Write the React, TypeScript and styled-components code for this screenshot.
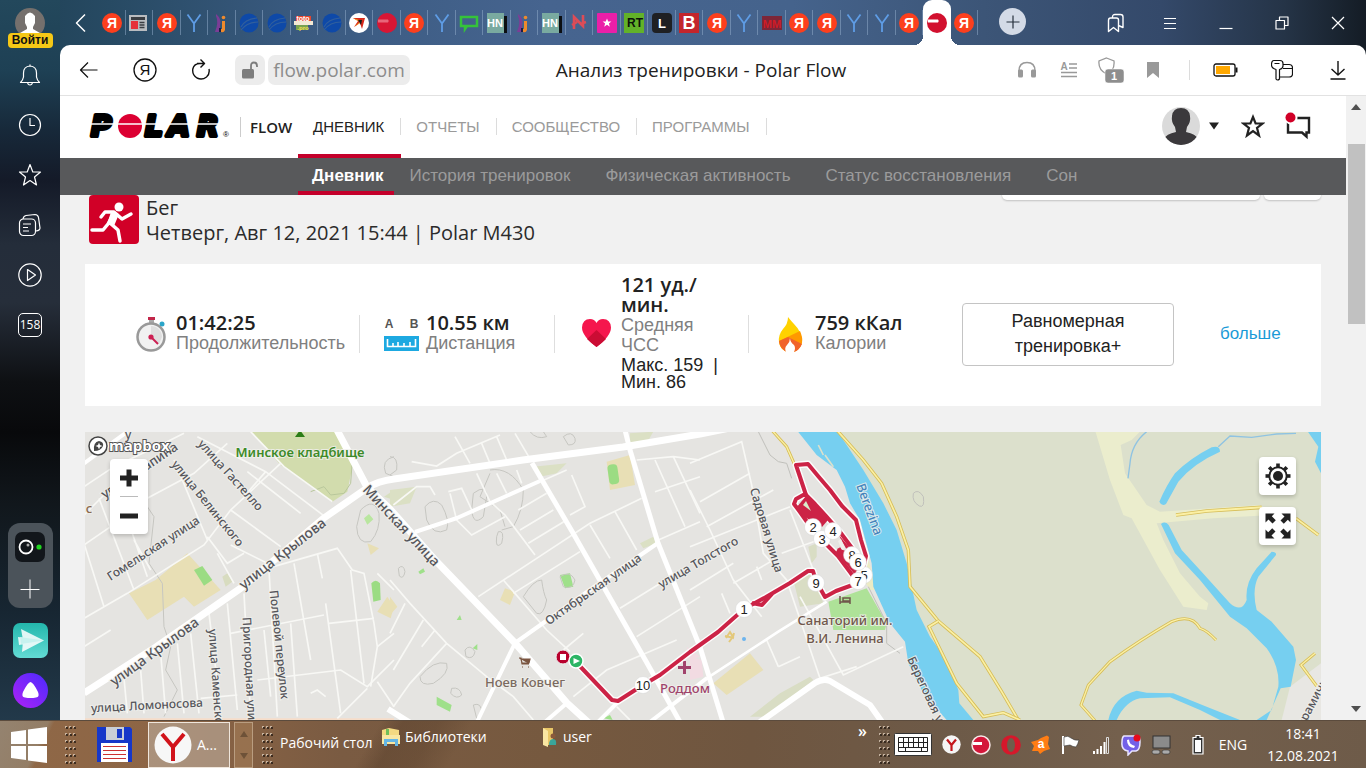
import React from 'react';
import styled, { createGlobalStyle, css } from 'styled-components';

const UI = '"Open Sans", "Noto Sans", sans-serif';
const ARIAL = '"Liberation Sans", Arial, sans-serif';
const RED = '#d10027';

const GlobalStyle = createGlobalStyle`
  *, *::before, *::after { box-sizing: border-box; }
  body { margin: 0; background: #10161d; font-family: ${ARIAL}; color: #222; }
  button { font: inherit; color: inherit; background: none; border: 0; padding: 0; cursor: pointer; }
  a { color: inherit; text-decoration: none; }
  svg { display: block; flex: none; }
`;

const Desktop = styled.div`
  height: 100vh;
  display: flex;
  flex-direction: column;
  overflow: hidden;
`;

const Browser = styled.div`
  flex: 1;
  min-height: 0;
  display: flex;
  background: linear-gradient(90deg, #1f4054 0, #274a63 8%, #3a5a80 22%, #46648f 40%, #45638c 58%, #3c5577 72%, #34496a 85%, #253447 94%, #141c25 100%);
`;

/* ---------- side panel ---------- */

const SidePanel = styled.aside`
  width: 60px;
  flex: none;
  display: flex;
  flex-direction: column;
  align-items: center;
  padding: 8px 0 12px;
  color: #fff;
  background: linear-gradient(180deg, #23485c 0, #1e4054 10%, #17293a 18%, #141a28 25%, #242d3a 34%, #262e3a 42%, #0e1013 53%, #08090b 60%, #11171c 70%, #172632 85%, #22394a 100%);
`;

const SignIn = styled.button`
  display: flex;
  flex-direction: column;
  align-items: center;
  height: 42px;
`;

const SignInLabel = styled.span`
  width: 45px;
  height: 15px;
  margin-top: -5px;
  border-radius: 4px;
  background: #f5c816;
  color: #111;
  font: 700 12px/15px ${ARIAL};
  position: relative;
`;

const SideButton = styled.button`
  width: 50px;
  height: 50px;
  display: grid;
  place-items: center;
`;

const TabCounter = styled.span`
  width: 24px;
  height: 24px;
  border: 1px solid #fff;
  border-radius: 5px;
  font: 400 12px/22px ${UI};
`;

const AppDock = styled.div`
  margin-top: auto;
  display: flex;
  flex-direction: column;
  align-items: center;
  gap: 15px;
`;

const DockGroup = styled.div`
  width: 45px;
  height: 85px;
  border-radius: 12px;
  background: #4b535a;
  display: flex;
  flex-direction: column;
  align-items: center;
  justify-content: space-around;
`;

/* ---------- tab strip ---------- */

const Main = styled.div`
  flex: 1;
  min-width: 0;
  display: flex;
  flex-direction: column;
`;

const TabStrip = styled.div`
  height: 45px;
  flex: none;
  display: flex;
  align-items: flex-start;
`;

const ScrollTabs = styled.button`
  width: 38px;
  height: 45px;
  display: grid;
  place-items: center;
  padding-left: 6px;
`;

const Tabs = styled.div`
  width: 880px;
  height: 45px;
  display: grid;
  grid-template-columns: repeat(32, minmax(0, 1fr));
`;

const Tab = styled.button<{ $active?: boolean }>`
  display: grid;
  place-items: center;
  position: relative;
  &::after {
    content: '';
    position: absolute;
    right: 0;
    top: 10px;
    width: 1px;
    height: 25px;
    background: rgba(150, 175, 205, 0.5);
  }
  ${p => p.$active && css`
    background: #fff;
    border-radius: 9px 9px 0 0;
    &::before, &::after {
      content: '';
      position: absolute;
      top: auto;
      bottom: 0;
      width: 9px;
      height: 9px;
      background: radial-gradient(circle at 0 0, transparent 9px, #fff 9px);
    }
    &::before { left: -9px; }
    &::after { right: -9px; transform: scaleX(-1); }
  `}
`;

const NewTab = styled.button`
  width: 27px;
  height: 27px;
  margin: 8px 0 0 21px;
  border-radius: 50%;
  background: #d3dae6;
  display: grid;
  place-items: center;
`;

const WindowButtons = styled.div`
  margin-left: auto;
  display: grid;
  grid-template-columns: repeat(5, 56px);
`;

const WindowButton = styled.button`
  height: 45px;
  display: grid;
  place-items: center;
`;

/* ---------- address bar ---------- */

const AddressBar = styled.div`
  height: 51px;
  flex: none;
  display: flex;
  align-items: center;
  background: #fff;
  border-bottom: 1px solid #e2e2e2;
  border-radius: 10px 10px 0 0;
`;

const NavButtons = styled.div`
  display: grid;
  grid-template-columns: repeat(3, 56px);
  padding: 0 6px 0 1px;
`;

const ToolButton = styled.button`
  height: 40px;
  display: grid;
  place-items: center;
`;

const Chip = styled.button<{ $wide?: boolean }>`
  height: 30px;
  width: ${p => (p.$wide ? '142px' : '30px')};
  margin-right: 3px;
  border-radius: 7px;
  background: #ececec;
  color: #8d8d8d;
  font: 400 19px/30px ${UI};
  display: grid;
  place-items: center;
`;

const PageTitle = styled.h1`
  flex: 1;
  margin: 0;
  padding-right: 17px;
  text-align: center;
  color: #222;
  font: 400 19px/30px ${UI};
`;

const ToolGroup = styled.div<{ $col: number; $n: number }>`
  display: grid;
  grid-template-columns: repeat(${p => p.$n}, ${p => p.$col}px);
`;

const ToolDivider = styled.span`
  width: 1px;
  height: 20px;
  margin: 0 8px 0 15px;
  background: #dcdcdc;
`;

/* ---------- page ---------- */

const Viewport = styled.div`
  flex: 1;
  min-height: 0;
  display: flex;
`;

const Page = styled.div`
  flex: 1;
  min-width: 0;
  display: flex;
  flex-direction: column;
  background: #f1f1f1;
`;

const SiteHeader = styled.header`
  height: 62px;
  flex: none;
  display: flex;
  align-items: center;
  padding: 0 35px 0 26px;
  background: #fff;
`;

const FlowLink = styled.a`
  margin-left: 10px;
  padding-left: 9px;
  border-left: 1px solid #ccc;
  width: 58px;
  color: #222;
  font: 600 15px/20px ${UI};
`;

const SiteNav = styled.nav`
  display: flex;
  height: 62px;
`;

const SiteLink = styled.a<{ $active?: boolean }>`
  display: flex;
  align-items: center;
  font: 400 15px/17px ${ARIAL};
  color: ${p => (p.$active ? '#222' : '#9a9a9a')};
  border-bottom: 4px solid ${p => (p.$active ? '#c4002b' : 'transparent')};
  padding-top: 2px;
  span { padding: 0 16px 0 15px; border-right: 1px solid #dcdcdc; }
`;

const HeaderTools = styled.div`
  margin: 0 0 2px auto;
  display: flex;
  align-items: center;
`;

const Avatar = styled.button`
  display: flex;
  align-items: center;
  gap: 9px;
  margin-right: 22px;
`;

const HeaderTool = styled.button`
  margin-right: 20px;
  &:last-child { margin-right: 0; }
`;

const SubNav = styled.nav`
  height: 37px;
  flex: none;
  display: flex;
  background: #58595b;
  padding-left: 238px;
`;

const SubLink = styled.a<{ $active?: boolean }>`
  padding: 0 ${p => (p.$active ? 10 : 14)}px 0 14px;
  margin-right: ${p => (p.$active ? 2 : 7)}px;
  font: ${p => (p.$active ? 700 : 400)} 17px/36px ${ARIAL};
  color: ${p => (p.$active ? '#fff' : '#9b9b9b')};
  border-bottom: 4px solid ${p => (p.$active ? '#c4002b' : 'transparent')};
`;

const Content = styled.main`
  flex: 1;
  min-height: 0;
  overflow: hidden;
  display: flex;
  flex-direction: column;
  padding: 0 25px;
`;

const SessionHead = styled.section`
  display: flex;
  align-items: flex-start;
  height: 69px;
  flex: none;
`;

const SportIcon = styled.span`
  width: 50px;
  height: 49px;
  margin: 0 7px 0 4px;
  border-radius: 4px;
  background: ${RED};
`;

const SessionText = styled.div`
  font: 400 20px/25px ${UI};
  color: #2b2b2b;
  p { margin: 0; }
`;

const SessionActions = styled.div`
  margin-left: auto;
  display: flex;
  gap: 4px;
`;

const GhostButton = styled.button<{ $w: number }>`
  width: ${p => p.$w}px;
  height: 38px;
  margin-top: -33px;
  border-radius: 5px;
  background: #fff;
  box-shadow: 0 1px 2px rgba(0, 0, 0, 0.2);
`;

const Summary = styled.section`
  flex: none;
  min-height: 142px;
  display: grid;
  grid-template-columns: 275fr 195fr 194fr 213fr 212fr 147fr;
  align-items: center;
  padding-bottom: 2px;
  background: #fff;
`;

const Stat = styled.div<{ $pad: number; $gap: number; $last?: boolean }>`
  display: flex;
  align-items: center;
  gap: ${p => p.$gap}px;
  height: 38px;
  padding-left: ${p => p.$pad}px;
  border-right: 1px solid ${p => (p.$last ? 'transparent' : '#dedede')};
`;

const StatText = styled.div`
  min-width: 0;
  padding-bottom: 2px;
`;

const StatValue = styled.div`
  font: 600 20px/20px ${UI};
  color: #222;
`;

const StatLabel = styled.div`
  font: 400 18px/20px ${ARIAL};
  color: #808080;
`;

const StatExtra = styled.div`
  margin-top: 2px;
  font: 400 18px/17px ${ARIAL};
  color: #222;
  white-space: pre;
`;

const TargetButton = styled.button`
  height: 63px;
  border: 1px solid #c4c4c4;
  border-radius: 4px;
  font: 400 18px/25px ${ARIAL};
  color: #222;
  padding: 0 40px;
`;

const MoreLink = styled.a`
  padding-left: 46px;
  font: 400 17px/20px ${ARIAL};
  color: #1a9ad7;
`;

/* ---------- map ---------- */

const MapPanel = styled.section`
  flex: 1;
  min-height: 0;
  margin-top: 26px;
  position: relative;
  overflow: hidden;
`;

const MapSvg = styled.svg`
  width: 100%;
  height: 100%;
`;

const Label = styled.text<{ $size?: number; $color?: string; $weight?: number }>`
  font-family: "Noto Sans", "Open Sans", sans-serif;
  font-size: ${p => p.$size ?? 13}px;
  font-weight: ${p => p.$weight ?? 500};
  fill: ${p => p.$color ?? '#55555a'};
  stroke: rgba(240, 240, 236, 0.85);
  stroke-width: 2px;
  paint-order: stroke;
  dominant-baseline: central;
`;

const KmText = styled.text`
  font: 400 13px ${ARIAL};
  fill: #222;
  text-anchor: middle;
`;

const ZoomBox = styled.div`
  position: absolute;
  left: 25px;
  top: 27px;
  width: 38px;
  height: 75px;
  border-radius: 4px;
  background: #fff;
  box-shadow: 0 2px 4px rgba(0, 0, 0, 0.2);
  display: grid;
  grid-template-rows: 1fr 1px 1fr;
  justify-items: center;
  i { width: 18px; height: 1px; background: #bbb; }
  button { width: 38px; display: grid; place-items: center; }
`;

const MapTools = styled.div`
  position: absolute;
  right: 25px;
  top: 25px;
  display: grid;
  gap: 12px;
`;

const MapTool = styled.button`
  width: 37px;
  height: 38px;
  border-radius: 4px;
  background: #fff;
  box-shadow: 0 2px 4px rgba(0, 0, 0, 0.2);
  display: grid;
  place-items: center;
`;

const MapBrand = styled.a`
  position: absolute;
  left: 2px;
  top: 2px;
`;

const ScrollBar = styled.div`
  width: 20px;
  flex: none;
  display: flex;
  flex-direction: column;
  align-items: center;
  padding: 8px 0;
  background: #f1f1f1;
`;

const Thumb = styled.div`
  width: 17px;
  height: 180px;
  margin-top: 34px;
  margin-bottom: auto;
  background: #c1c1c1;
`;

/* ---------- taskbar ---------- */

const Taskbar = styled.footer`
  height: 48px;
  flex: none;
  display: flex;
  align-items: center;
  color: #fff;
  font: 400 14px/20px ${UI};
  border-top: 1px solid #5b4b3d;
  background:
    linear-gradient(115deg, rgba(150, 140, 125, 0.75) 0, rgba(150, 135, 115, 0.7) 44px, transparent 50px),
    linear-gradient(120deg, transparent 330px, rgba(60, 40, 25, 0.25) 350px, rgba(60, 40, 25, 0.2) 380px, transparent 410px),
    linear-gradient(90deg, #8f6847 0, #8d6545 12%, #7a5b42 25%, #76593f 40%, #6f5640 55%, #6d5a48 70%, #74604d 82%, #6e5b49 100%);
`;

const StartButton = styled.button`
  width: 65px;
  padding-left: 11px;
`;

const GripSvg = styled.svg`
  opacity: 0.8;
`;

const Launcher = styled.button`
  margin: 0 15px 0 20px;
`;

const TaskButton = styled.button`
  width: 82px;
  height: 46px;
  display: flex;
  align-items: center;
  gap: 4px;
  padding-left: 4px;
  border: 1px solid #efe6dc;
  background: rgba(190, 175, 160, 0.6);
`;

const TaskScroll = styled.div`
  width: 19px;
  height: 46px;
  margin: 0 9px 0 4px;
  display: flex;
  flex-direction: column;
  justify-content: space-around;
  align-items: center;
  border: 1px solid #b99d80;
  background: rgba(170, 130, 90, 0.5);
`;

const Shortcuts = styled.div`
  display: flex;
  align-items: center;
  padding: 0 0 3px 7px;
`;

const Shortcut = styled.button<{ $w: number; $low?: boolean }>`
  display: flex;
  align-items: center;
  gap: 4px;
  width: ${p => p.$w}px;
  padding-bottom: ${p => (p.$low ? 0 : 12)}px;
  white-space: nowrap;
`;

const Tray = styled.div`
  margin-left: auto;
  display: flex;
  align-items: center;
`;

const Overflow = styled.button`
  font: 600 16px/20px ${UI};
  padding-bottom: 28px;
  margin-right: 12px;
`;

const TrayIcons = styled.div`
  display: grid;
  grid-template-columns: 38px repeat(8, 30px);
  justify-items: center;
  align-items: center;
  margin: 0 16px 0 8px;
  svg:first-child { margin-right: 8px; }
`;

const Lang = styled.button`
  width: 58px;
`;

const Clock = styled.time`
  width: 104px;
  padding-right: 22px;
  text-align: center;
  font: 400 14px/22px ${UI};
`;

/* ---------- favicons ---------- */

const IconText = styled.text<{ $size: number; $fill?: string }>`
  font: 700 ${p => p.$size}px ${ARIAL};
  fill: ${p => p.$fill ?? '#fff'};
  text-anchor: middle;
`;

const Favicon = ({ kind }: { kind: string }) => {
  const art: Record<string, React.ReactNode> = {
    ya: <><circle cx="10" cy="10" r="10" fill="#fc3f1d" /><IconText x="10" y="15" $size={14}>Я</IconText></>,
    y: <path d="M3.500 1.500 L10 10.500 V19 M16.500 1.500 L10 10.500" fill="none" stroke="#5f9de6" strokeWidth="1.800" />,
    news: <><rect x="0" y="2" width="18" height="16" fill="#b9bcc0" /><rect x="2" y="4" width="14" height="3" fill="#3a3d42" /><rect x="2" y="8" width="7" height="8" fill="#e6323a" /><path d="M10.500 9.500h5M10.500 12h5M10.500 14.500h5" stroke="#3a3d42" strokeWidth="1.500" /></>,
    ij: <><path d="M4 1 Q10 6 8 12 L8 19 L3 19 Q7 9 4 3z" fill="#7b3d96" /><path d="M10 8 H13 V17 Q12 20 9 19 V16 H10z" fill="#ef8a2c" /><circle cx="11.500" cy="4.500" r="1.800" fill="#ef8a2c" /><path d="M7 15h2v4h-2z" fill="#1b1f44" /></>,
    ball: <><circle cx="10" cy="10" r="9.500" fill="#0e49a8" /><path d="M2 14 Q6 6 18 5 M2 17 Q8 9 19 9" fill="none" stroke="#315f9d" strokeWidth="1.200" /></>,
    toto: <><rect x="2" y="3" width="15" height="5" fill="#e8452e" /><rect x="0" y="8" width="19" height="4" fill="#f3e9d4" /><rect x="2" y="12" width="12" height="5" fill="#79a24f" /><IconText x="9" y="8" $size={7}>toto</IconText><IconText x="9" y="17" $size={6} $fill="#f8e14c">.pro</IconText></>,
    arrow: <><circle cx="10" cy="10" r="10" fill="#fff" /><path d="M4 5 L16 5 L13 16 L11 10 L5 14 L9 8z" fill="#d8291c" /><path d="M4 5 L13 8 L9 8z M5 14 L11 10 L14 6z" fill="#f5a81c" /><path d="M9 7 L13 7 L12 12z" fill="#1c1c1c" /></>,
    polar: <><circle cx="10" cy="10" r="10" fill="#d81634" /><path d="M1 6.500 H11 Q12.500 8 11 9.500 H1z" fill="#e8667a" /></>,
    polarOn: <><circle cx="10" cy="10" r="10" fill="#d2102e" /><path d="M1 6.500 H11 Q12.500 8 11 9.500 H1z" fill="#fff" /></>,
    chat: <path d="M2 4 H18 V13 H8 L6 16 V13 H2z" fill="none" stroke="#35c33a" strokeWidth="2.500" />,
    hn: <><rect width="17" height="20" fill="#79aaa0" /><rect x="17" y="3" width="3" height="17" fill="#0c0f12" /><IconText x="8" y="14" $size={11}>HN</IconText></>,
    n: <path d="M5 16 V4 L14 13 V2 M3 12 L8 9 M11 11 L17 9" fill="none" stroke="#dd4c57" strokeWidth="2.600" />,
    star: <><rect width="20" height="20" rx="1" fill="#ea1fa8" /><path d="M10 5.500l1.200 3h3.200l-2.500 2 .9 3.200-2.800-1.900-2.800 1.900.9-3.200-2.500-2h3.200z" fill="#fff" /></>,
    rt: <><rect width="20" height="20" fill="#62b229" /><IconText x="11" y="14" $size={12} $fill="#0c120a">RT</IconText></>,
    l: <><rect width="20" height="20" rx="4" fill="#1f2023" /><IconText x="10" y="15" $size={13}>L</IconText></>,
    b: <><rect width="20" height="20" fill="#c3252b" /><IconText x="10" y="16" $size={18}>B</IconText></>,
    mm: <><rect x="0" y="3" width="20" height="14" fill="#7d2638" /><IconText x="10" y="15" $size={11} $fill="#d01b26">ММ</IconText></>,
  };
  return <svg width="20" height="20" viewBox="0 0 20 20" aria-hidden="true">{art[kind]}</svg>;
};

const TABS = ['ya', 'news', 'ya', 'y', 'ij', 'ball', 'ball', 'toto', 'ball', 'arrow', 'polar', 'ya', 'y', 'chat', 'hn', 'ij', 'hn', 'n', 'star', 'rt', 'l', 'b', 'ya', 'y', 'mm', 'ya', 'ya', 'y', 'y', 'ya', 'polarOn', 'ya'];

/* A line icon in a square box */
const Line = ({ s = 24, w = 1.2, c = '#fff', children }: { s?: number; w?: number; c?: string; children: React.ReactNode }) => (
  <svg width={s} height={s} viewBox={`0 0 ${s} ${s}`} fill="none" stroke={c} strokeWidth={w} strokeLinejoin="round" aria-hidden="true">{children}</svg>
);

const Grip = () => (
  <GripSvg width="11" height="40" viewBox="-1 0 11 40" aria-hidden="true">
    {[0, 1, 2, 3, 4, 5].map(r => [0, 1, 2].map(k => (
      <g key={`${r}${k}`}><rect x={k * 4 - 1} y={r * 7 + 1} width="2" height="2" fill="#d9c8b6" /><rect x={k * 4} y={r * 7 + 2} width="2" height="2" fill="#2b2018" /></g>
    )))}
  </GripSvg>
);

const Logo = () => (
  <svg width="144" height="34" viewBox="86 110 144 34" role="img" aria-label="Polar">
    <g fontFamily='"DejaVu Sans", sans-serif' fontWeight="700" fontStyle="italic" fontSize="28" stroke="#000" strokeWidth="4" strokeLinejoin="round">
      <text x="91" y="136">P</text>
      <text x="145" y="136">L</text>
      <text x="168" y="136">A</text>
      <text x="197" y="136">R</text>
    </g>
    <circle cx="130" cy="126" r="12" fill="#dc0032" />
    <path d="M86 124 H226" stroke="#fff" strokeWidth="1.500" />
    <text x="223" y="137" fontFamily='"Liberation Sans", sans-serif' fontSize="8">®</text>
  </svg>
);

/* ---------- map drawing ---------- */

/* Vector tiles are drawn at three units per screen pixel */
const Tile = ({ x, y = 430, children }: { x: number; y?: number; children: React.ReactNode }) => (
  <g transform={`translate(${x} ${y}) scale(0.33333)`}>{children}</g>
);

const Yellow = ({ d, w = 10 }: { d: string; w?: number }) => (
  <>
    <path d={d} fill="none" stroke="#d6bd58" strokeWidth={w} />
    <path d={d} fill="none" stroke="#fbf0a4" strokeWidth={w - 5} />
  </>
);

type Street = { t: string; x: number; y: number; a: number; size?: number; start?: boolean; color?: string; weight?: number };
const STREETS: Street[] = [
  { t: 'улица Чапина', x: 139, y: 470, a: -34 },
  { t: 'улица Гастелло', x: 231, y: 475, a: 48, size: 12 },
  { t: 'улица Белинского', x: 208, y: 503, a: 51, size: 12 },
  { t: 'Гомельская улица', x: 153, y: 548, a: -33, size: 12 },
  { t: 'улица Крылова', x: 154, y: 651, a: -36, size: 14 },
  { t: 'улица Крылова', x: 282, y: 553, a: -38, size: 14 },
  { t: 'Минская улица', x: 402, y: 525, a: 47, size: 14 },
  { t: 'улица Ломоносова', x: 147, y: 705, a: -3, size: 12 },
  { t: 'улица Каменского', x: 213, y: 629, a: 86, size: 12, start: true },
  { t: 'Пригородная улица', x: 247, y: 617, a: 87, size: 12, start: true },
  { t: 'Полевой переулок', x: 274, y: 590, a: 84, size: 12, start: true },
  { t: 'Октябрьская улица', x: 593, y: 589, a: -35, size: 12 },
  { t: 'улица Толстого', x: 698, y: 562, a: -30, size: 12 },
  { t: 'Садовая улица', x: 767, y: 530, a: 73, size: 12 },
  { t: 'Береговая улица', x: 911, y: 657, a: 65, size: 12, start: true },
  { t: 'ерамичн', x: 1312, y: 702, a: -62, size: 12 },
  { t: 'Berezina', x: 870, y: 509, a: 70, size: 13, color: '#4585bd' },
  { t: 'Минское кладбище', x: 300, y: 452, a: 0, size: 13, color: '#3d8a28', weight: 600 },
  { t: 'Ноев Ковчег', x: 525, y: 682, a: 0, color: '#7b6a60' },
  { t: 'Санаторий им.', x: 845, y: 620, a: 0, color: '#70574c' },
  { t: 'В.И. Ленина', x: 845, y: 638, a: 0, color: '#70574c' },
  { t: 'Роддом', x: 685, y: 688, a: 0, color: '#a0446c' },
  { t: 'с', x: 89, y: 508, a: 0, color: '#8a6a50' },
];

const KM: [string, number, number][] = [
  ['8', 852, 555], ['5', 864, 575], ['2', 813, 527], ['3', 822, 539], ['4', 833, 531], ['6', 858, 562], ['7', 858, 581], ['9', 816, 583], ['1', 744, 609], ['10', 643, 685],
];

const ROUTE = [
  'M575 661 L612 700 L618 701 L643 685 L660 675 L690 652 L718 632 L744 609 L766 597 L790 583 L808 571 L813 571 L816 581 L825 597 L836 591 L858 583',
  'M752 603 L762 605 L772 594',
  'M858 583 L850 572 L838 556 L822 540 L812 529 L800 512 L794 504 L796 499 L805 494 L815 504 L826 516 L840 532 L852 548 L862 564',
  'M806 495 L796 465 L808 464 L818 476 L830 490 L842 506 L856 520 L861 540 L866 556 L862 572',
];

const RoutePath = () => (
  <>
    {ROUTE.map(d => <path key={d} d={d} fill="none" stroke="#fff" strokeWidth="7" strokeLinejoin="round" opacity="0.9" />)}
    {ROUTE.map(d => <path key={d} d={d} fill="none" stroke="#cc2346" strokeWidth="4" strokeLinejoin="round" />)}
    <path d="M796 508 L806 496 L828 520 L822 527 L803 516z" fill="#cc2346" />
    <path d="M803 505 L806 501 L811 511z" fill="#d9eccb" />
    <path d="M838 534 L862 562 L856 576 L836 552 L838 548 L848 552z" fill="#cc2346" />
    <path d="M836 553 L840 547 L852 565z" fill="#cc2346" />
    <path d="M838 541 L841 539 L845 548 L842 550z" fill="#f0f0ec" />
  </>
);

const MapDrawing = () => (
  <MapSvg viewBox="85 432 1236 288" preserveAspectRatio="xMinYMin slice" role="img" aria-label="Карта маршрута">
    <rect x="85" y="432" width="1236" height="288" fill="#e5e4e1" />
    <Tile x={84}>
      <path d="M500 5 H765 L805 110 L790 185 L745 215 L590 105z" fill="#d2dcad" />
      <path d="M680 185 L720 170 L740 195 L780 190 L800 160 L805 90" fill="none" stroke="#b9c79c" strokeWidth="3" />
      <path d="M900 200 L930 180 V210z" fill="#d8dfc0" />
      <path d="M135 490 L215 450 L310 370 L410 480 L330 530 L300 500 L190 570z" fill="#e8dfb5" />
      <path d="M330 420 L355 408 L385 450 L360 467z" fill="#9bdc83" />
      <path d="M415 440 L430 430 L445 455 L425 470z" fill="#d8dcc0" />
      <path d="M862 460 Q875 445 888 460 L890 510 L868 515z" fill="#9bdc83" />
      <path d="M840 265 L855 252 L868 268 L850 284z" fill="#b9e69f" />
      <path d="M850 340 L885 355 L860 375z M880 545 L910 500 L930 530 L920 565z" fill="#e8dfb5" />
      <path d="M0 865 H930 V870 H0z" fill="#f6ddc9" />
      <g fill="none" stroke="#c6c6c1" strokeWidth="3">
        <path d="M130 110 L190 230 L210 260 L195 400 L235 460 L240 590 L260 650 L245 720 L280 780 L240 860" />
        <path d="M830 240 Q870 200 885 250 Q890 300 860 335 Q820 345 818 290z" />
        <path d="M930 80 Q890 90 905 130 L930 140" />
      </g>
      <g fill="none" stroke="#f8f8f5" strokeWidth="5">
        <path d="M0 565 L130 490 L360 345 L440 240 L590 100 M0 340 L60 530 M45 205 L150 480 M100 180 L190 440 M0 170 L90 110 L240 40 L300 10 M0 255 L60 195 M150 330 L200 420 M0 345 L80 290 M180 210 L330 130 L430 40" />
        <path d="M340 20 L545 125 L730 265 M500 5 L600 110 L745 215 M490 125 L650 250 M440 240 L590 350 M370 320 L430 400 L480 370 M400 370 L450 460 M270 90 L370 330 M440 345 L550 400 M545 125 L480 200" />
        <path d="M550 415 L760 355 L805 420 L840 430 L870 580 L880 650 L860 770 M630 400 L680 690 M700 370 L715 445 M725 520 L770 850 M440 610 L720 555 M735 580 L870 565 M375 550 L410 840 M430 520 L460 840 M480 490 L500 860 M555 420 L580 860 M540 600 L560 800 M620 580 L640 860" />
        <path d="M320 610 L345 850 M280 640 L300 850 M230 670 L245 850 M170 720 L180 850 M120 745 L130 850 M350 805 L460 795 M520 750 L770 720 L850 770 L930 690 M880 755 L930 830 M760 865 L850 775 M680 790 L700 780 L725 800 M880 430 L930 480 M880 650 L930 610 M800 420 L840 760 M0 650 L80 600" />
      </g>
      <path d="M0 100 L130 5" stroke="#fff" strokeWidth="12" />
    </Tile>
    <Tile x={390}>
      <path d="M0 180 L80 170 L60 220 L0 230z M430 110 L530 100 L500 130 L450 140z M750 340 L790 320 L800 340 L760 355z M720 10 L790 5 L770 40 L720 45z" fill="#dbe0c4" />
      <path d="M650 95 L720 75 L735 165 L660 180z" fill="#e8dfb5" />
      <rect x="655" y="103" width="30" height="60" rx="12" transform="rotate(-8 670 133)" fill="#9bdc83" />
      <path d="M510 435 L540 430 L550 470 L525 475z M140 800 L185 825 L180 845 L140 825z M85 425 L100 415 L105 425 L90 433z M200 570 L210 555 L215 570z M640 865 L660 855 L668 870z M248 655 L262 642 L262 660z" fill="#9fe08a" />
      <path d="M345 475 L375 485 L360 525 L330 510z M0 500 L22 530 L0 555z" fill="#e8dfb5" />
      <path d="M930 680 L900 690 L890 650z" fill="#f2dbe2" />
      <g fill="none" stroke="#c6c6c1" strokeWidth="3">
        <path d="M105 230 Q130 200 155 225 Q180 270 170 300 Q130 320 110 270z M250 190 Q290 160 290 200 L280 260 Q250 290 245 240z M325 305 Q345 300 335 340 Q315 360 320 320z" />
        <path d="M520 20 Q545 0 555 25 Q560 45 535 45z M420 5 Q440 30 470 20 L460 5 M0 80 Q25 80 20 120 L0 135 M25 415 Q40 400 45 425 Q40 450 28 438z M400 500 Q430 450 455 450 Q460 490 470 510 Q460 560 440 550z M510 440 Q540 420 555 450 Q550 480 520 470z" />
        <path d="M90 740 Q130 690 170 700 Q180 730 130 760 Q90 770 90 740z M225 660 Q240 640 255 665 Q250 690 228 680z M185 775 Q210 770 215 795 Q200 810 182 790z M250 825 Q275 815 275 850 L260 865z M300 120 Q360 110 400 180 Q400 240 370 290 L335 300 M300 130 L270 200 L330 240 L345 290" />
      </g>
      <g fill="none" stroke="#f8f8f5" strokeWidth="5">
        <path d="M65 95 L140 108 L200 70 L330 15 M195 20 L240 100 M275 40 L300 100 M320 20 L350 90 M375 10 L425 95 M10 225 L80 170 L120 170 L135 195 M175 185 L215 175 L250 250 M180 190 L200 270 L245 315 L345 260 M260 130 L300 215 L345 255 L435 375 M385 240 L470 190 M390 300 L490 240 M415 340 L530 270 M320 130 L350 190 M380 120 L395 160" />
        <path d="M265 500 L440 385 L600 280 L755 205 M340 450 L470 600 L540 665 M370 490 L570 365 M545 135 L585 230 L540 255 M600 285 L660 385 M675 245 L740 360 M740 90 L850 80 L930 90 M795 90 L885 290 M795 185 L930 140 M805 330 L930 275 M690 535 L860 430 M740 620 L930 500 M550 800 L650 720 L860 630 M520 660 L580 610 M850 80 L930 250" />
        <path d="M0 450 L60 520 L170 640 L290 740 L370 800 L430 870 M45 520 L0 610 M100 570 L10 720 M135 600 L95 650 M170 640 L60 760 L10 830 M680 830 L720 870 M450 155 L530 120" />
      </g>
    </Tile>
    <Tile x={690}>
      <path d="M70 760 L180 670 L220 720 L110 795z" fill="#e8dfb5" />
      <path d="M310 450 L370 430 L400 520 L330 530z M355 350 L380 340 L380 380 L365 400z M180 860 L270 790 L360 740 L370 750 L230 860z" fill="#d9ddc4" />
      <path d="M0 680 L35 690 L40 740 L0 750z" fill="#f2dbe2" />
      <path d="M520 330 L560 480 L540 480 L515 440z" fill="#ecebc4" />
      <path d="M415 515 L530 475 L590 580 L585 600 L430 600z" fill="#aee298" />
      <path d="M320 0 L380 75 L440 120 L465 170 L480 220 L510 270 L545 400 L550 470 L600 580 L645 635 L655 700 L700 790 L770 870 H900 V0z" fill="#76cff0" />
      <path d="M440 0 L520 120 L580 220 L620 300 L650 400 L680 540 L720 620 L770 690 L805 780 L808 820 L850 870 H1893 V0z" fill="#dce0cc" />
      <path d="M385 45 L400 75 M405 75 L430 110" stroke="#dce0cc" strokeWidth="5" />
      <g fill="none" stroke="#c0c0bb" strokeWidth="3">
        <path d="M205 5 L240 75 L265 95 L290 100 L305 145 M535 470 L590 580 L590 640 L630 670" />
        <path d="M670 190 Q685 175 700 200 Q705 235 688 228 Q665 215 670 190z" />
      </g>
      <g fill="none" stroke="#f8f8f5" strokeWidth="5">
        <path d="M0 100 L155 35 L185 165 M30 215 L180 130 M0 180 L60 300 L130 450 L215 560 M0 350 L300 230 M50 290 L250 180 M130 460 L250 390 M185 165 L220 370 L290 450 L390 745 M300 240 L370 420 M275 370 L385 330 M200 410 L215 450 M95 490 L120 550 M230 630 L265 710 M330 500 L460 735 L640 650 M390 745 L500 710 M265 710 L330 680 M0 480 L130 400" />
      </g>
      <path d="M50 745 L265 605 L410 515" fill="none" stroke="#fff" strokeWidth="8" />
      <Yellow d="M440 0 L520 90 L575 160 L620 260 L655 360 L660 470 L745 573 L870 680 L935 785 L985 870" />
      <Yellow d="M745 573 L717 590 L800 760 L880 860 L940 848 L990 870" />
      <Yellow d="M245 0 L290 50 L310 95 L345 190" w={9} />
    </Tile>
    <Tile x={1000}>
      <path d="M285 0 H425 L395 30 L362 45 L375 130 L440 225 L480 245 L780 225 L820 255 L640 265 L470 280 L490 330 L540 430 L600 500 L625 520 L620 540 L550 530 L480 420 L395 265 L370 255 L330 150z" fill="#ebedcd" />
      <path d="M845 870 L870 770 L963 700 V870z" fill="#e8e7e3" />
      <path d="M440 5 Q395 40 390 100 L384 145 M655 50 L690 18 L755 22 L830 12 L888 10" fill="none" stroke="#8fc3e2" strokeWidth="4" />
      <path d="M920 0 H963 V130 L945 95 L955 50z" fill="#76cff0" />
      <path d="M478 215 Q500 165 525 130 Q570 85 635 52 Q660 45 660 65 Q580 100 535 155 L498 222 Q485 230 478 215z" fill="#76cff0" />
      <path d="M483 282 Q495 272 506 285 L545 360 L600 420 L690 520 Q725 550 740 510 Q735 460 770 415 L815 365 Q830 365 828 375 L775 440 Q755 480 770 540 L815 575 L880 650 L888 690 L872 770 L842 775 L800 870 H770 L815 840 L835 770 Q840 710 800 655 L740 595 L690 560 L600 450 L525 370z" fill="#76cff0" />
      <path d="M325 870 Q340 800 410 782 L440 788 L520 790 L620 830 L720 870 H660 L600 840 L510 802 L420 805 Q375 815 350 870z" fill="#76cff0" />
      <Yellow d="M528 255 L620 243 L785 232" w={11} />
      <Yellow d="M888 265 L955 315" />
      <Yellow d="M648 630 Q620 600 600 595 Q575 550 515 575 Q420 630 330 695 L265 765 L243 825 L285 872" w={9} />
      <Yellow d="M945 670 L903 705 L950 768" w={9} />
    </Tile>
    <g fill="none" stroke="#fff" strokeLinejoin="round">
      <path d="M84 693 L156 647 L241 588 L324 518 L367 488 Q378 481 394 479 L523 460 L623 447 L700 434 L740 426" strokeWidth="7" />
      <path d="M337 430 L367 487 L390 509 L437 562 L515 643 L567 703 L590 724" strokeWidth="7" />
      <path d="M532 463 L573 533 L647 663 L680 722" strokeWidth="5" />
      <path d="M625 430 L630 450 L658 543 L700 647 L723 722" strokeWidth="5" />
      <path d="M415 532 L457 518 L540 481" strokeWidth="4" />
      <path d="M658 543 L594 587 L515 643 L476 724" strokeWidth="4" />
      <path d="M545 722 L567 703 M598 722 L620 700 M650 722 L707 678" strokeWidth="4" />
      <path d="M760 722 L815 683 Q823 678 830 681 L870 705 L882 722 M388 709 L412 724" strokeWidth="6" />
    </g>
    {STREETS.map(s => (
      <Label key={`${s.t}${s.x}`} transform={`translate(${s.x} ${s.y}) rotate(${s.a})`} textAnchor={s.start ? 'start' : 'middle'} $size={s.size} $color={s.color} $weight={s.weight}>{s.t}</Label>
    ))}
    <Label x="125" y="434" $size={12}>у</Label>
    <path d="M300 430 L295 437 H305z" fill="#2c7d16" />
    <path d="M519 658 h2 l1 6 h7 M521 659 h9 l-1 4 h-7z M522 667 h1 M528 667 h1" fill="#7a5540" stroke="#7a5540" strokeWidth="1.200" />
    <path d="M683 661 h3 v5 h5 v3 h-5 v5 h-3 v-5 h-5 v-3 h5z" fill="#a0446c" />
    <path d="M840 596 v8 M840 602 h10 v2 M843 598 h7 v3 h-7z" stroke="#70574c" strokeWidth="1.500" fill="none" />
    <path d="M726 638 l4 -6 3 5 1 -4 M729 642 l3 -4 M725 636 l9 2" stroke="#e3c87a" strokeWidth="2" fill="none" />
    <circle cx="744" cy="639" r="2" fill="#6cb4ee" />
    <RoutePath />
    {KM.map(([n, x, y]) => (
      <g key={n}><circle cx={x} cy={y} r="8.500" fill="#fff" stroke="#d5d5d5" strokeWidth="0.500" /><KmText x={x} y={y + 5}>{n}</KmText></g>
    ))}
    <circle cx="563" cy="657" r="7" fill="#b8002c" stroke="#eee" strokeWidth="1" />
    <rect x="560" y="654" width="6" height="6" fill="#fff" />
    <circle cx="576" cy="661" r="7" fill="#2cb565" stroke="#fff" strokeWidth="1.500" />
    <path d="M573.500 658 L580 661 L573.500 664z" fill="#fff" />
  </MapSvg>
);

/* ---------- sections ---------- */

const Side = () => (
  <SidePanel>
    <SignIn>
      <svg width="30" height="30" viewBox="0 0 30 30" aria-hidden="true"><circle cx="15" cy="15" r="15" fill="#75706d" /><path d="M10 8 Q15 1 20 8 V15 L18 19 V21 L25 25 Q15 33 5 25 L12 21 V19 L10 15z" fill="#fff" /></svg>
      <SignInLabel>Войти</SignInLabel>
    </SignIn>
    <SideButton aria-label="Уведомления"><Line><path d="M12 1.500 V3 M12 3 Q5.500 3.500 5.500 10 V14 Q5 17 2.500 19.500 H21.500 Q19 17 18.500 14 V10 Q18.500 3.500 12 3z M9.500 19.500 Q10 22 12 22 T14.500 19.500" /></Line></SideButton>
    <SideButton aria-label="История"><Line><circle cx="12" cy="12" r="10.500" /><path d="M12 5 V12.500 H17" /></Line></SideButton>
    <SideButton aria-label="Избранное"><Line><path d="M12 1.500 L14.800 9 H22.500 L16.500 14 L18.500 22 L12 17.500 L5.500 22 L7.500 14 L1.500 9 H9.200z" /></Line></SideButton>
    <SideButton aria-label="Коллекции"><Line><rect x="1.500" y="6" width="16" height="16.500" rx="4" /><path d="M5 6 Q5.500 3 8 2.500 L17 1.500 Q20 1.500 20.500 4.500 L22 15 Q22 17.500 18 18 M5 11 H13 M5 14.500 H10 M5 18 H11" /></Line></SideButton>
    <SideButton aria-label="Видео"><Line><circle cx="12" cy="12" r="11.200" /><path d="M9.500 6.500 L17.500 12 L9.500 17.500z" /></Line></SideButton>
    <SideButton aria-label="Вкладки"><TabCounter>158</TabCounter></SideButton>
    <AppDock>
      <DockGroup>
        <button aria-label="Камера"><svg width="30" height="30" viewBox="0 0 30 30" aria-hidden="true"><rect width="30" height="30" rx="7" fill="#12161b" /><circle cx="11" cy="15" r="6.500" fill="none" stroke="#fff" strokeWidth="1.800" /><circle cx="13" cy="13" r="1.500" fill="#aaa" /><circle cx="24" cy="15" r="2.600" fill="#1ed51e" /></svg></button>
        <button aria-label="Добавить"><Line s={20} w={1}><path d="M10 0.500 V19.500 M0.500 10.500 H19.500" /></Line></button>
      </DockGroup>
      <button aria-label="Мессенджер"><svg width="35" height="35" viewBox="0 0 35 35" aria-hidden="true"><defs><linearGradient id="msg" x2="0" y2="1"><stop offset="0" stopColor="#23b7ac" /><stop offset="1" stopColor="#63dbd4" /></linearGradient></defs><rect width="35" height="35" rx="7" fill="url(#msg)" /><path d="M8 6 L31 17.500 L10 17z M5 14 L31 17.500 L6 22z M10 18 L31 17.500 L9 29z" fill="#fff" opacity="0.850" /><path d="M7 14 L31 17.500 L8 21z" fill="#c8f2ef" /></svg></button>
      <button aria-label="Алиса"><svg width="35" height="35" viewBox="0 0 35 35" aria-hidden="true"><defs><linearGradient id="alice" x1="1" x2="0" y2="1"><stop offset="0" stopColor="#4a2bff" /><stop offset="1" stopColor="#b021f5" /></linearGradient></defs><circle cx="17.500" cy="17.500" r="17.500" fill="url(#alice)" /><path d="M17.500 9 Q20 9 25 19 Q27 24 23 24.500 Q17.500 25.500 12 24.500 Q8 24 10 19 Q15 9 17.500 9z" fill="#fff" /></svg></button>
    </AppDock>
  </SidePanel>
);

const TopBar = () => (
  <TabStrip>
    <ScrollTabs aria-label="Прокрутить вкладки"><Line s={20} w={1.500}><path d="M13 1.500 L4.500 10 L13 18.500" /></Line></ScrollTabs>
    <Tabs>{TABS.map((k, i) => <Tab key={i} $active={k === 'polarOn'} aria-label={`Вкладка ${i + 1}`}><Favicon kind={k} /></Tab>)}</Tabs>
    <NewTab aria-label="Новая вкладка"><Line s={14} w={1.200} c="#26303c"><path d="M7 0.500 V13.500 M0.500 7 H13.500" /></Line></NewTab>
    <WindowButtons>
      <WindowButton aria-label="Закладки"><Line s={20} w={1.400}><path d="M4.500 7.500 Q4.500 5 6.500 5 H12.500 Q14.500 5 14.500 7 V18.500 L9.500 14.500 L4.500 18.500z M8.500 5 V4 Q8.500 1.500 11 1.500 H16.500 Q19 1.500 19 4 V14.500 L14.500 12.500" /></Line></WindowButton>
      <WindowButton aria-label="Меню"><Line s={14} w={1}><path d="M1 2.500 H13 M1 7.500 H13 M1 12.500 H13" /></Line></WindowButton>
      <WindowButton aria-label="Свернуть"><Line s={14}><path d="M0.500 12.500 H13.500" /></Line></WindowButton>
      <WindowButton aria-label="Развернуть"><Line s={14}><path d="M1 4.500 H9.500 V13 H1z M4.500 4.500 V1 H13 V9.500 H9.500" /></Line></WindowButton>
      <WindowButton aria-label="Закрыть"><Line s={14}><path d="M1 1 L13 13 M13 1 L1 13" /></Line></WindowButton>
    </WindowButtons>
  </TabStrip>
);

const Address = () => (
  <AddressBar>
    <NavButtons>
      <ToolButton aria-label="Назад"><Line s={20} c="#111"><path d="M1.500 10 H18.500 M9 2.500 L1.500 10 L9 17.500" /></Line></ToolButton>
      <ToolButton aria-label="Яндекс"><svg width="24" height="24" viewBox="0 0 24 24" aria-hidden="true"><circle cx="12" cy="12" r="11" fill="none" stroke="#111" strokeWidth="1.300" /><text x="12" y="17" textAnchor="middle" fontFamily='"Liberation Sans", sans-serif' fontSize="15" fill="#111">Я</text></svg></ToolButton>
      <ToolButton aria-label="Обновить"><Line s={22} w={1.400} c="#111"><path d="M10 4.500 Q4 4.500 2.800 10 Q2 16 7 19 Q12 21.500 16.500 18 Q20 15 19 10 M7 4.500 H14.500 M10.500 0.500 L14.500 4.500 L10.500 8.500" /></Line></ToolButton>
    </NavButtons>
    <Chip aria-label="Соединение не защищено"><svg width="18" height="18" viewBox="0 0 18 18" aria-hidden="true"><rect x="1" y="8" width="12" height="9.500" rx="1.500" fill="#7d7d7d" /><path d="M10 8 V5 Q10 1.500 13 1.500 T16 5 V6" fill="none" stroke="#7d7d7d" strokeWidth="1.800" /></svg></Chip>
    <Chip $wide>flow.polar.com</Chip>
    <PageTitle>Анализ тренировки - Polar Flow</PageTitle>
    <ToolGroup $n={4} $col={42}>
      <ToolButton aria-label="Слушать"><svg width="20" height="18" viewBox="0 0 20 18" aria-hidden="true"><path d="M2 10 Q2 1.500 10 1.500 T18 10" fill="none" stroke="#999" strokeWidth="1.500" /><rect x="1" y="8.500" width="5" height="8" rx="1.500" fill="#999" /><rect x="14" y="8.500" width="5" height="8" rx="1.500" fill="#999" /></svg></ToolButton>
      <ToolButton aria-label="Режим чтения"><svg width="18" height="18" viewBox="0 0 18 18" aria-hidden="true"><path d="M9 3 H17 M9 7 H17 M1 11.500 H17 M1 15.500 H17" stroke="#999" strokeWidth="1.600" /><text x="4" y="9" textAnchor="middle" fontFamily='"Liberation Sans", sans-serif' fontWeight="700" fontSize="10" fill="#999">A</text></svg></ToolButton>
      <ToolButton aria-label="Защита"><svg width="26" height="26" viewBox="0 0 26 26" aria-hidden="true"><path d="M8.500 1 L16 4 Q17 14 8.500 17 Q0 13 1 4z" fill="none" stroke="#999" strokeWidth="1.300" /><rect x="7" y="12" width="19" height="14" rx="3" fill="#8e8e8e" stroke="#fff" strokeWidth="0.500" /><text x="16" y="23" textAnchor="middle" fontFamily='"Liberation Sans", sans-serif' fontWeight="700" fontSize="11" fill="#fff">1</text></svg></ToolButton>
      <ToolButton aria-label="Закладка"><svg width="14" height="18" viewBox="0 0 14 18" aria-hidden="true"><path d="M1 1 H13 V17 L7 12 L1 17z" fill="#999" /></svg></ToolButton>
    </ToolGroup>
    <ToolDivider />
    <ToolGroup $n={3} $col={56}>
      <ToolButton aria-label="Батарея"><svg width="26" height="14" viewBox="0 0 26 14" aria-hidden="true"><rect x="1" y="1" width="21" height="12" rx="2" fill="none" stroke="#111" strokeWidth="1.300" /><path d="M22.500 4.500 h2 v5 h-2z" fill="#111" /><rect x="3" y="3" width="14" height="8" fill="#ffa800" /></svg></ToolButton>
      <ToolButton aria-label="Пароли"><Line s={22} c="#111"><path d="M3 1.500 H9 Q12 1.500 12 4.500 V7 Q12 9.500 8.500 10.500 V20 Q6.500 22 5 20 V10.500 Q0.500 9 0.500 6 Q0.500 1.500 3 1.500z M3.500 4.500 H8.500 M12.500 5.500 H18 Q21.500 5.500 21.500 9 V15 Q21.500 18 18 18 H9 M12 9.500 H21" /></Line></ToolButton>
      <ToolButton aria-label="Загрузки"><Line s={20} w={1.400} c="#111"><path d="M10 1 V15 M3.500 9 L10 15 L16.500 9 M2.500 19 H17.500" /></Line></ToolButton>
    </ToolGroup>
  </AddressBar>
);

const Header = () => (
  <>
    <SiteHeader>
      <a href="#home"><Logo /></a>
      <FlowLink href="#flow">FLOW</FlowLink>
      <SiteNav>
        {['ДНЕВНИК', 'ОТЧЕТЫ', 'СООБЩЕСТВО', 'ПРОГРАММЫ'].map((t, i) => <SiteLink key={t} href={`#nav${i}`} $active={i === 0}><span>{t}</span></SiteLink>)}
      </SiteNav>
      <HeaderTools>
        <Avatar aria-label="Профиль">
          <svg width="38" height="38" viewBox="0 0 38 38" aria-hidden="true"><defs><clipPath id="av"><circle cx="19" cy="19" r="19" /></clipPath></defs><g clipPath="url(#av)"><rect width="38" height="38" fill="#dadada" /><path d="M10 9 Q11 1 19 1 T28 9 Q29 15 25 20 L24 25 Q34 27 36 32 V38 H2 V32 Q4 27 14 25 L13 20 Q9 15 10 9z" fill="#3b393c" /></g></svg>
          <svg width="10" height="8" viewBox="0 0 10 8" aria-hidden="true"><path d="M0 0.500 H10 L5 7.500z" fill="#222" /></svg>
        </Avatar>
        <HeaderTool aria-label="Избранное"><svg width="24" height="24" viewBox="0 0 24 24" aria-hidden="true"><path d="M12 3 L14.600 9.500 H21.500 L16 13.800 L18 21.500 L12 17 L6 21.500 L8 13.800 L2.500 9.500 H9.400z" fill="none" stroke="#222" strokeWidth="2.200" /></svg></HeaderTool>
        <HeaderTool aria-label="Сообщения"><svg width="26" height="28" viewBox="0 0 26 28" aria-hidden="true"><path d="M3 6 H24 V20.500 H21.500 V24.500 L17 20.500 H3z" fill="none" stroke="#222" strokeWidth="2.400" /><circle cx="6" cy="6" r="6.500" fill="#fff" /><circle cx="5.500" cy="5.500" r="5" fill="#d10027" /></svg></HeaderTool>
      </HeaderTools>
    </SiteHeader>
    <SubNav>
      {['Дневник', 'История тренировок', 'Физическая активность', 'Статус восстановления', 'Сон'].map((t, i) => <SubLink key={t} href={`#sub${i}`} $active={i === 0}>{t}</SubLink>)}
    </SubNav>
  </>
);

const Session = () => (
  <>
    <SessionHead>
      <SportIcon>
        <svg width="50" height="49" viewBox="0 0 50 49" aria-hidden="true"><circle cx="30" cy="12" r="4.500" fill="#fff" /><path d="M12 22 L16 17 L25 17 L33 24 L42 19 M25 18 L19 29 L14 35 H3 M21 28 L29 35 L31 46" fill="none" stroke="#fff" strokeWidth="3.500" strokeLinejoin="round" strokeLinecap="round" /><path d="M22 17 L30 19 L25 31 L18 29z" fill="#fff" /></svg>
      </SportIcon>
      <SessionText><p>Бег</p><p>Четверг, Авг 12, 2021 15:44 | Polar M430</p></SessionText>
      <SessionActions><GhostButton $w={258} aria-label="Действия" /><GhostButton $w={57} aria-label="Ещё" /></SessionActions>
    </SessionHead>
    <Summary>
      <Stat $pad={51} $gap={9}>
        <svg width="31" height="36" viewBox="0 0 31 36" aria-hidden="true"><path d="M12 1 H19 V4 H18 V7 H13 V4 H12z" fill="#c2274a" /><path d="M13 4 H18 V7 H13z" fill="#aaa" /><circle cx="26" cy="8" r="2.500" fill="#2ba5c9" /><circle cx="15" cy="21" r="13.500" fill="#f1f1f1" stroke="#999" strokeWidth="2.500" /><path d="M15 10 A11 11 0 0 1 26 21 L23 28 L15 21z" fill="#dedede" /><path d="M15 21 L22 28" stroke="#cc1f52" strokeWidth="2" /><circle cx="15" cy="21" r="2.600" fill="#cc1f52" /></svg>
        <StatText><StatValue>01:42:25</StatValue><StatLabel>Продолжительность</StatLabel></StatText>
      </Stat>
      <Stat $pad={24} $gap={7}>
        <svg width="35" height="36" viewBox="0 0 35 36" aria-hidden="true"><IconText x="5" y="12" $size={12} $fill="#555">A</IconText><IconText x="30" y="12" $size={12} $fill="#555">B</IconText><rect y="20" width="35" height="15" fill="#1da9e1" /><path d="M3.500 23 V30.500 H31.500 V23 M9 27 V30 M14 26 V30 M20 27 V30 M26 26 V30" fill="none" stroke="#fff" strokeWidth="1.600" /></svg>
        <StatText><StatValue>10.55 км</StatValue><StatLabel>Дистанция</StatLabel></StatText>
      </Stat>
      <Stat $pad={26} $gap={9}>
        <svg width="31" height="32" viewBox="0 0 31 32" aria-hidden="true"><path d="M15.500 29 Q1 18 1 9.500 Q1.500 1 9 1 Q13.500 1 15.500 5 Q17.500 1 22 1 Q29.500 1 30 9.500 Q30 18 15.500 29z" fill="#f5164d" /><path d="M15.500 12 L25 21 Q21 25 15.500 29 Q10 25 6 21z" fill="#cb0c34" /></svg>
        <StatText><StatValue>121 уд./<br />мин.</StatValue><StatLabel>Средняя<br />ЧСС</StatLabel><StatExtra>{'Макс. 159  |\nМин. 86'}</StatExtra></StatText>
      </Stat>
      <Stat $pad={29} $gap={12} $last>
        <svg width="25" height="36" viewBox="0 0 25 36" aria-hidden="true"><path d="M10 1 Q14 6 16 8 Q24 16 24 25 Q23 34 15 36 H10 Q2 34 1 26 Q0 19 5 13 Q10 8 10 1z" fill="#ffd200" /><path d="M1 25 L22 15 Q25 22 24 27 Q22 34 15 36 H10 Q2 34 1 25z" fill="#ff9900" /><path d="M1 25 L10 21 L24 28 Q21 35 15 36 H10 Q2 34 1 25z" fill="#f1632b" /><path d="M12 22 Q12 26 16 29 Q18 32 16 36 H8 Q6 32 9 29 Q12 26 12 22z" fill="#fff" /></svg>
        <StatText><StatValue>759 кКал</StatValue><StatLabel>Калории</StatLabel></StatText>
      </Stat>
      <TargetButton>Равномерная тренировка+</TargetButton>
      <MoreLink href="#more">больше</MoreLink>
    </Summary>
    <MapPanel>
      <MapDrawing />
      <MapBrand href="#mapbox" aria-label="mapbox">
        <svg width="90" height="26" viewBox="0 0 90 26" aria-hidden="true"><circle cx="11" cy="12" r="9" fill="#fff" stroke="#444" strokeWidth="1.500" /><path d="M7 17 Q6 8 12 7 Q17 8 16 12 Q14 17 7 17z" fill="#444" /><path d="M12 8.500 l1 2.500 2.500 1 -2.500 1 -1 2.500 -1 -2.500 -2.500 -1 2.500 -1z" fill="#fff" /><text x="22" y="17" fontFamily='"Open Sans", sans-serif' fontWeight="700" fontSize="15" fill="#fff" stroke="#555" strokeWidth="2" paintOrder="stroke">mapbox</text></svg>
      </MapBrand>
      <ZoomBox>
        <button aria-label="Приблизить"><Line s={18} w={5} c="#222"><path d="M9 0.500 V17.500 M0 9 H18" /></Line></button>
        <i />
        <button aria-label="Отдалить"><Line s={18} w={5} c="#222"><path d="M0 9 H18" /></Line></button>
      </ZoomBox>
      <MapTools>
        <MapTool aria-label="Настройки"><svg width="26" height="26" viewBox="0 0 26 26" aria-hidden="true"><g stroke="#222" strokeWidth="3.600">{[0, 45, 90, 135].map(a => <path key={a} d="M13 0.500 V25.500" transform={`rotate(${a} 13 13)`} />)}</g><circle cx="13" cy="13" r="8.700" fill="#fff" stroke="#222" strokeWidth="2" /><circle cx="13" cy="13" r="5" fill="#222" /></svg></MapTool>
        <MapTool aria-label="На весь экран"><svg width="26" height="26" viewBox="0 0 26 26" aria-hidden="true">{[0, 90, 180, 270].map(a => <path key={a} transform={`rotate(${a} 13 13)`} d="M0.500 0.500 H9.500 L6.800 3.200 L10.800 7.200 L7.500 10.500 L3.500 6.500 L0.500 9.500z" fill="#222" />)}</svg></MapTool>
      </MapTools>
    </MapPanel>
  </>
);

const Bottom = () => (
  <Taskbar>
    <StartButton aria-label="Пуск"><svg width="36" height="36" viewBox="0 0 36 36" aria-hidden="true"><path d="M0 5 L15 3 V17 H0z M17 2.500 L36 0 V17 H17z M0 19 H15 V33 L0 31z M17 19 H36 V36 L17 33.500z" fill="#fff" /></svg></StartButton>
    <Grip />
    <Launcher aria-label="Total Commander"><svg width="37" height="37" viewBox="0 0 37 37" aria-hidden="true"><path d="M1 1 H34 L36 3 V36 H1z" fill="#1637c9" /><rect x="10" y="1" width="18" height="13" fill="#c9ced6" /><rect x="21" y="3" width="5" height="9" fill="#1637c9" /><rect x="5" y="17" width="27" height="19" fill="#fff" /><path d="M7 20.500h23M7 24.500h23M7 28.500h23M7 32.500h23" stroke="#c33" strokeWidth="1" /></svg></Launcher>
    <TaskButton>
      <svg width="40" height="40" viewBox="0 0 40 40" aria-hidden="true"><circle cx="20" cy="20" r="18.500" fill="#f7f7f7" /><path d="M9 9 L20 22 V36 M31 9 L20 22" fill="none" stroke="#d1131b" strokeWidth="4" /></svg>
      А...
    </TaskButton>
    <TaskScroll><svg width="8" height="6"><path d="M0 6 L4 0 L8 6z" fill="#6e5238" /></svg><svg width="8" height="6"><path d="M0 0 L4 6 L8 0z" fill="#6e5238" /></svg></TaskScroll>
    <Grip />
    <Shortcuts>
      <Shortcut $w={101} $low>Рабочий стол</Shortcut>
      <Shortcut $w={160}><svg width="20" height="20" viewBox="0 0 20 20" aria-hidden="true"><path d="M1 3 L8 1 L18 3 V17 H1z" fill="#f3d981" /><path d="M5 2h3v7h-3z" fill="#6fbf5a" /><path d="M1 8 H19 V17 H1z" fill="#f8e7a2" /><path d="M3 12 H17 V19 H14 V15 H6 V19 H3z" fill="#63b6e6" /></svg>Библиотеки</Shortcut>
      <Shortcut $w={60}><svg width="18" height="20" viewBox="0 0 18 20" aria-hidden="true"><path d="M2 1 H12 V18 H2z" fill="#e9c767" /><path d="M2 1 L7 4 V20 L2 18z" fill="#f9e6a2" /><circle cx="12" cy="9" r="2.500" fill="#8a5a3c" /><path d="M8 18 Q8 12 12 12 T15 18z" fill="#3aa59a" /></svg>user</Shortcut>
    </Shortcuts>
    <Tray>
      <Overflow aria-label="Ещё">»</Overflow>
      <Grip />
      <TrayIcons>
        <svg width="38" height="23" viewBox="0 0 38 23" aria-hidden="true"><rect x="0.500" y="0.500" width="37" height="22" rx="1" fill="#fff" stroke="#333" /><path d="M4.500 4.500 H33.500 V18.500 H4.500z M4 9.500 H34 M4 14.500 H34 M9.500 4 V14 M14.500 4 V14 M19.500 4 V14 M24.500 4 V14 M29.500 4 V14 M11.500 14 V19 M27.500 14 V19" fill="none" stroke="#222" /></svg>
        <svg width="19" height="19" viewBox="0 0 19 19"><circle cx="9.500" cy="9.500" r="9.200" fill="#f5f5f5" /><path d="M5 4.500 L9.500 10 V16 M14 4.500 L9.500 10" fill="none" stroke="#c4161c" strokeWidth="2.200" /></svg>
        <svg width="20" height="20" viewBox="0 0 20 20"><circle cx="10" cy="10" r="9" fill="#d4173a" stroke="#f7e7e7" strokeWidth="1.500" /><path d="M2 7 H11 V10 H2z" fill="#fff" /></svg>
        <svg width="20" height="20" viewBox="0 0 20 20"><circle cx="10" cy="10" r="9.800" fill="#d6182b" /><ellipse cx="10" cy="10" rx="4" ry="7" fill="#6f5d4b" /></svg>
        <svg width="20" height="20" viewBox="0 0 20 20"><path d="M7 5 L10 3 L16 0.500 L18 2 L17 9 L19 14 L13 16 L9 19 L7 16 L1 16 L3 11 L0 7z" fill="#ff7d14" /><IconText x="10" y="13" $size={12}>a</IconText></svg>
        <svg width="20" height="20" viewBox="0 0 20 20"><path d="M2 1 V19" stroke="#fff" strokeWidth="2" /><path d="M3 2 Q7 0 10 3 Q14 6 18 5 Q17 9 15 12 Q12 12 9 10 L3 11z" fill="#fff" stroke="#333" strokeWidth="0.600" /></svg>
        <svg width="18" height="18" viewBox="0 0 18 18"><path d="M1 15h2v3h-2z M4.500 13h2v5h-2z M8 10h2v8h-2z M11.500 6h2v12h-2z" fill="#fff" /><path d="M14.500 1.500h2v16h-2z" fill="none" stroke="#ddd" /></svg>
        <svg width="22" height="22" viewBox="0 0 22 22"><path d="M4 2 H18 Q20 3 20 8 Q20 16 16 17 H12 L8 21 V17 Q1 16 2 8 Q2 3 4 2z" fill="#7360e8" stroke="#e9e4ff" strokeWidth="1.500" /><path d="M7 6 Q7 13 14 14 L15 12 L12.500 11 Q10 10 9.500 8 L9 5.500z" fill="#fff" /><circle cx="17" cy="4" r="3.500" fill="#e60b1c" /></svg>
        <svg width="20" height="20" viewBox="0 0 20 20"><rect x="2" y="1" width="17" height="12" fill="#8b8b8b" stroke="#333" /><rect x="1" y="15" width="8" height="4" rx="2" fill="#aaa" stroke="#333" strokeWidth="0.600" /><rect x="11" y="15" width="8" height="4" rx="2" fill="#aaa" stroke="#333" strokeWidth="0.600" /></svg>
      </TrayIcons>
      <svg width="12" height="20" viewBox="0 0 12 20" aria-hidden="true"><path d="M4 0.500 H8 V2.500 H11 V19 H1 V2.500 H4z" fill="#333" stroke="#fff" strokeWidth="1.200" /><rect x="3" y="5" width="6" height="12" fill="#fff" /></svg>
      <Lang>ENG</Lang>
      <Clock>18:41<br />12.08.2021</Clock>
    </Tray>
  </Taskbar>
);

export default function App() {
  return (
    <Desktop>
      <GlobalStyle />
      <Browser>
        <Side />
        <Main>
          <TopBar />
          <Address />
          <Viewport>
            <Page>
              <Header />
              <Content><Session /></Content>
            </Page>
            <ScrollBar>
              <svg width="10" height="6" aria-hidden="true"><path d="M0 6 L5 0 L10 6z" fill="#505050" /></svg>
              <Thumb />
              <svg width="10" height="6" aria-hidden="true"><path d="M0 0 L5 6 L10 0z" fill="#505050" /></svg>
            </ScrollBar>
          </Viewport>
        </Main>
      </Browser>
      <Bottom />
    </Desktop>
  );
}
